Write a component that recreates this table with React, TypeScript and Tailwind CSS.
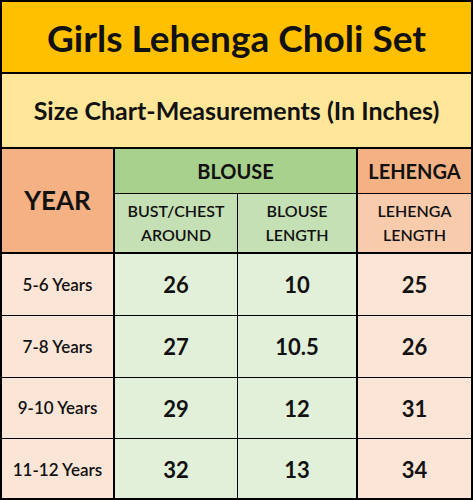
import React from "react";

// --- Size chart rows ---
const rows = [
    { year: "5-6 Years", bust: "26", blouse: "10", lehenga: "25" },
    { year: "7-8 Years", bust: "27", blouse: "10.5", lehenga: "26" },
    { year: "9-10 Years", bust: "29", blouse: "12", lehenga: "31" },
    { year: "11-12 Years", bust: "32", blouse: "13", lehenga: "34" },
];

const font = { fontFamily: "Lato, 'Open Sans', sans-serif" };

const App = () => {
    return (
        <div
            className="w-[473px] h-[500px] border-2 border-black bg-white text-[#111] flex flex-col overflow-hidden"
            style={font}
        >
            {/* Title */}
            <div className="h-[72px] shrink-0 border-b-2 border-black bg-[#FFC000] flex items-center justify-center">
                <h1 className="text-[37px] font-bold leading-none">Girls Lehenga Choli Set</h1>
            </div>

            {/* Subtitle */}
            <div className="h-[75px] shrink-0 border-b-2 border-black bg-[#FFE699] flex items-center justify-center">
                <h2 className="text-[25px] font-bold leading-none">Size Chart-Measurements (In Inches)</h2>
            </div>

            {/* Table */}
            <div className="grid grid-cols-[113px_123px_120px_113px] grid-rows-[45px_60px_62px_62px_61px_61px]">
                <div className="row-span-2 bg-[#F4B183] border-r-2 border-b-2 border-black flex items-center justify-center text-[26px] font-bold">
                    YEAR
                </div>
                <div className="col-span-2 bg-[#A9D18E] border-r-2 border-b border-black flex items-center justify-center text-[20px] font-bold">
                    BLOUSE
                </div>
                <div className="bg-[#F4B183] border-b border-black flex items-center justify-center text-[20px] font-bold">
                    LEHENGA
                </div>

                <div className="bg-[#C5E0B4] border-r border-b-2 border-black flex items-center justify-center text-center text-[16px] font-semibold leading-[24px]">
                    BUST/CHEST<br />AROUND
                </div>
                <div className="bg-[#C5E0B4] border-r-2 border-b-2 border-black flex items-center justify-center text-center text-[16px] font-semibold leading-[24px]">
                    BLOUSE<br />LENGTH
                </div>
                <div className="bg-[#F8CBAD] border-b-2 border-black flex items-center justify-center text-center text-[16px] font-semibold leading-[24px]">
                    LEHENGA<br />LENGTH
                </div>

                {rows.map((r, i) => {
                    const last = i === rows.length - 1;
                    const bottom = last ? "" : "border-b border-black";
                    return (
                        <React.Fragment key={r.year}>
                            <div className={`bg-[#FBE5D6] border-r-2 border-black flex items-center justify-center text-[17px] font-semibold ${bottom}`}>
                                {r.year}
                            </div>
                            <div className={`bg-[#E2F0D9] border-r border-black flex items-center justify-center text-[22px] font-bold ${bottom}`}>
                                {r.bust}
                            </div>
                            <div className={`bg-[#E2F0D9] border-r-2 border-black flex items-center justify-center text-[22px] font-bold ${bottom}`}>
                                {r.blouse}
                            </div>
                            <div className={`bg-[#FBE5D6] flex items-center justify-center text-[22px] font-bold ${bottom}`}>
                                {r.lehenga}
                            </div>
                        </React.Fragment>
                    );
                })}
            </div>
        </div>
    );
};

export default App;
